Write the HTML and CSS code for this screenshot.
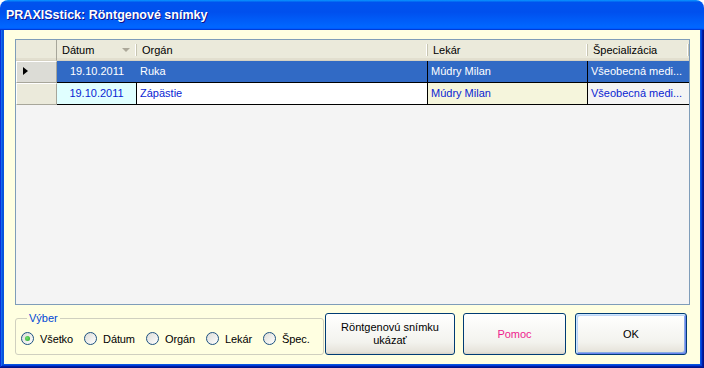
FILE: index.html
```html
<!DOCTYPE html>
<html lang="sk">
<head>
    <meta charset="UTF-8">
    <title>PRAXISstick: Röntgenové snímky</title>
    <link rel="stylesheet" href="styles.css">
</head>
<body>
    <div class="window">
        <!-- Title bar -->
        <div class="titlebar">PRAXISstick: Röntgenové snímky</div>

        <div class="frame">
            <div class="client">
                <!-- Data grid -->
                <div class="grid">
                    <div class="hcell corner"></div>
                    <div class="hcell">Dátum<span class="sort-arrow"></span></div>
                    <div class="hcell">Orgán</div>
                    <div class="hcell">Lekár</div>
                    <div class="hcell">Špecializácia</div>

                    <div class="rowhead current"><span class="pointer"></span></div>
                    <div class="cell sel date">19.10.2011</div>
                    <div class="cell sel line">Ruka</div>
                    <div class="cell sel line">Múdry Milan</div>
                    <div class="cell sel">Všeobecná medi...</div>

                    <div class="rowhead"></div>
                    <div class="cell date cyan line">19.10.2011</div>
                    <div class="cell white line">Zápästie</div>
                    <div class="cell beige line">Múdry Milan</div>
                    <div class="cell grey">Všeobecná medi...</div>
                </div>

                <!-- Bottom bar -->
                <div class="bottom">
                    <fieldset class="group">
                        <legend>Výber</legend>
                        <div class="radios">
                            <label class="radio"><span class="dot checked"></span>Všetko</label>
                            <label class="radio"><span class="dot"></span>Dátum</label>
                            <label class="radio"><span class="dot"></span>Orgán</label>
                            <label class="radio"><span class="dot"></span>Lekár</label>
                            <label class="radio"><span class="dot"></span>Špec.</label>
                        </div>
                    </fieldset>
                    <button class="btn btn-show">Röntgenovú snímku<br>ukázať</button>
                    <button class="btn btn-help">Pomoc</button>
                    <button class="btn btn-ok">OK</button>
                </div>
            </div>
        </div>
    </div>
</body>
</html>
```

FILE: styles.css
```css
/* Reset */
* {
    box-sizing: border-box;
    margin: 0;
    padding: 0;
}

body {
    width: 704px;
    height: 368px;
    overflow: hidden;
    background: #ffffff;
    font-family: "Liberation Sans", Arial, sans-serif;
    font-size: 11px;
    color: #000;
}

/* Window */
.window {
    width: 704px;
    height: 368px;
    display: flex;
    flex-direction: column;
}

.titlebar {
    height: 30px;
    flex: none;
    padding-left: 6px;
    line-height: 30px;
    border-radius: 8px 8px 0 0;
    background: linear-gradient(180deg, #0997ff, #0053ee 8%, #0050ee 40%, #0066ff 88%, #0066ff 93%, #005bff 95%, #003dd7 96%, #003dd7);
    color: #fff;
    font-size: 12.5px;
    font-weight: bold;
    text-shadow: 1px 1px #0f1089;
}

.frame {
    flex: 1;
    padding: 0 4px 4px;
    background: #0855dd;
    box-shadow: inset -1px -1px #00138c, inset 1px 0 #0831d9, inset -2px -2px #001ea0, inset 2px 0 #166aee, inset -3px -3px #003bda, inset 3px 0 #0855dd;
}

.client {
    height: 100%;
    background: #ffffe1;
    padding: 9px 10px 0 11px;
}

/* Grid */
.grid {
    height: 266px;
    border: 1px solid #7f9db9;
    background: #f4f4f4;
    display: grid;
    grid-template-columns: 41px 80px 291px 160px 101px;
    grid-template-rows: 21px 22px 22px;
    align-content: start;
}

.hcell {
    position: relative;
    padding: 4px 0 0 5px;
    background: #ebeadb;
    border-bottom: 1px solid #d6d2c2;
    box-shadow: inset 0 -2px #e2dfcf;
}

.hcell::after {
    content: "";
    position: absolute;
    right: 0;
    top: 4px;
    bottom: 4px;
    width: 1px;
    background: #c7c5b2;
    box-shadow: -1px 0 #fff;
}

.hcell.corner::after {
    display: none;
}

.hcell.corner {
    border-right: 1px solid #a7a69a;
}

.sort-arrow {
    position: absolute;
    right: 7px;
    top: 8px;
    border-left: 4px solid transparent;
    border-right: 4px solid transparent;
    border-top: 4px solid #aca899;
}

.rowhead {
    background: #ebeadb;
    border-top: 1px solid #fff;
    border-left: 1px solid #fff;
    border-right: 1px solid #a7a69a;
    border-bottom: 1px solid #a7a69a;
    position: relative;
}

.rowhead.current {
    background: #dcdcd6;
}

.pointer {
    position: absolute;
    left: 6px;
    top: 5px;
    border-top: 4px solid transparent;
    border-bottom: 4px solid transparent;
    border-left: 5px solid #000;
}

.cell {
    padding: 4px 0 0 3px;
    border-bottom: 1px solid #000;
    white-space: nowrap;
    overflow: hidden;
    color: #0a1ed2;
}

.cell.line {
    border-right: 1px solid #000;
}

.cell.date {
    text-align: center;
    padding-left: 0;
}

.cell.sel {
    background: #316ac5;
    color: #fff;
}

.cyan { background: #e0ffff; }
.white { background: #fff; }
.beige { background: #f5f5dc; }
.grey { background: #f4f4f4; }

/* Bottom bar */
.bottom {
    display: flex;
    align-items: flex-start;
    margin-top: 8px;
    height: 42px;
}

.group {
    width: 309px;
    height: 42px;
    border: 1px solid #d0d0bf;
    border-radius: 3px;
    padding: 0 0 0 5px;
}

.group legend {
    margin-left: 6px;
    padding: 0 2px;
    line-height: 11px;
    color: #0046d5;
}

.radios {
    display: flex;
    align-items: center;
    gap: 11px;
    margin-top: 8px;
    height: 13px;
    letter-spacing: -0.1px;
}

.radio {
    display: flex;
    align-items: center;
    gap: 6px;
}

.dot {
    width: 13px;
    height: 13px;
    border-radius: 50%;
    border: 1px solid #1c5180;
    background: linear-gradient(135deg, #dcdcd7, #ffffff);
    display: flex;
    align-items: center;
    justify-content: center;
}

.dot.checked::after {
    content: "";
    width: 5px;
    height: 5px;
    border-radius: 50%;
    background: radial-gradient(circle at 40% 40%, #72e072, #21a121);
}

.btn {
    height: 42px;
    margin-left: 1px;
    border: 1px solid #003c74;
    border-radius: 3px;
    background: linear-gradient(180deg, #ffffff, #f3f3ee 70%, #e6e3da 95%, #d6d0c5);
    font-family: "Liberation Sans", Arial, sans-serif;
    font-size: 11px;
    line-height: 13px;
    color: #000;
}

.btn-show {
    width: 130px;
}

.btn-help {
    width: 103px;
    margin-left: 8px;
    color: #ee1b8e;
}

.btn-ok {
    width: 112px;
    margin-left: 9px;
    box-shadow: inset 1px 1px #cee7ff, inset -1px -1px #6982ee, inset 2px 2px #bcd4f6, inset -2px -2px #89ade4;
}
```
